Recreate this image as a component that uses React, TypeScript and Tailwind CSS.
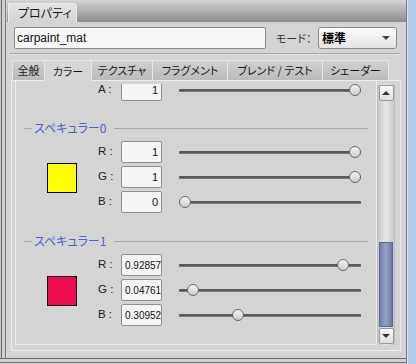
import React from "react";

type RowData = { label: string; value: string; v: number; left?: boolean };

const LATIN = "font-['Liberation_Sans','Noto_Sans_CJK_JP',sans-serif]";
const JP = "font-['Noto_Sans_CJK_JP','Liberation_Sans',sans-serif] [font-feature-settings:'palt']";

function Slider({ v }: { v: number }) {
  return (
    <div className="relative w-[182px] h-[22px] flex items-center">
      <div className="w-full h-[3px] rounded-[1px] bg-[#5a5a5a] border-b border-[#777777]" />
      <div
        className="absolute top-[5px] w-[12px] h-[12px] rounded-full border border-[#6a6a6a] bg-gradient-to-b from-[#f2f2f2] to-[#cdcdcd]"
        style={{ left: Math.round(v * 170) }}
      />
    </div>
  );
}

function Row({ r }: { r: RowData }) {
  return (
    <div className="flex items-center h-[22px]">
      <div className={`w-[23px] text-[11.5px] text-[#222] ${LATIN}`}>{r.label}</div>
      <div
        className={`w-[41px] h-[22px] border border-[#8e8e8e] rounded-[2px] bg-[#f5f5f5] overflow-hidden flex items-center whitespace-nowrap text-[#111] ${LATIN} ${
          r.left ? "justify-start pl-[3px] text-[10px]" : "justify-end pr-[3px] text-[11px]"
        }`}
      >
        {r.value}
      </div>
      <div className="ml-[17px]">
        <Slider v={r.v} />
      </div>
    </div>
  );
}

function Header({ title }: { title: string }) {
  return (
    <div className="flex items-center h-[16px]">
      <div className="ml-[8px] w-[8px] h-[1px] bg-[#a8a8a8]" />
      <div className={`ml-[2px] text-[12px] leading-[16px] text-[#4d62c6] ${JP}`}>{title}</div>
      <div className="ml-[8px] mr-[8px] flex-1 h-[1px] bg-[#a8a8a8]" />
    </div>
  );
}

function Section({ swatch, rows }: { swatch: string; rows: RowData[] }) {
  return (
    <div className="flex">
      <div className="w-[82px] flex items-center pt-[2px]">
        <div className={`ml-[31px] w-[30px] h-[30px] border border-black ${swatch}`} />
      </div>
      <div className="flex flex-col gap-[3px]">
        {rows.map((r) => (
          <Row key={r.label} r={r} />
        ))}
      </div>
    </div>
  );
}

const tabs: [string, string][] = [
  ["全般", "w-[33px]"],
  ["カラー", "w-[47px]"],
  ["テクスチャ", "w-[61px]"],
  ["フラグメント", "w-[75px]"],
  ["ブレンド / テスト", "w-[95px]"],
  ["シェーダー", "w-[66px]"],
];

export default function App() {
  return (
    <div className={`w-[416px] h-[364px] bg-[#d4d4d4] flex overflow-hidden ${JP}`}>
      <div className="w-[406px] h-full flex flex-col">
        <div className="h-[358px] flex">
          {/* left frame */}
          <div className="w-[7px] h-full flex">
            <div className="w-[1px] bg-[#c6c6c6]" />
            <div className="w-[1px] bg-[#6c6c6c]" />
            <div className="w-[3px] bg-[#d0d0d0]" />
            <div className="w-[1px] bg-[#7c7c7c]" />
            <div className="w-[1px] bg-[#d4d4d4]" />
          </div>
          {/* main */}
          <div className="flex-1 flex flex-col">
            {/* title bar */}
            <div className="h-[22px] bg-gradient-to-b from-[#d4d4d4] to-[#8c8c8c] flex items-end">
              <div className="ml-[1px] w-[69px] h-[19px] rounded-tr-[4px] border-t border-r border-l border-[#eaeaea] bg-gradient-to-b from-[#e2e2e2] to-[#d4d4d4] flex items-center pl-[9px] text-[12px] text-[#1a1a1a]">
                プロパティ
              </div>
            </div>
            {/* name + mode */}
            <div className="mt-[5px] pl-[7px] flex items-center h-[22px]">
              <div
                className={`w-[252px] h-[22px] border border-[#8a8a8a] rounded-[2px] bg-[#f7f7f7] flex items-center pl-[2px] text-[12px] text-[#111] ${LATIN}`}
              >
                carpaint_mat
              </div>
              <div className="ml-[10px] w-[36px] text-[11px] text-[#333]">モード：</div>
              <div className="ml-[6px] w-[79px] h-[22px] border border-[#8a8a8a] rounded-[3px] bg-gradient-to-b from-[#fcfcfc] to-[#e4e4e4] flex items-center justify-between pl-[3px] pr-[6px]">
                <span className="text-[12px] font-bold text-black">標準</span>
                <div className="w-0 h-0 border-x-[4px] border-x-transparent border-t-[4px] border-t-[#444]" />
              </div>
            </div>
            {/* separator */}
            <div className="mt-[4px] ml-[3px] w-[390px] h-[1px] bg-[#a6a6a6]" />
            <div className="ml-[3px] w-[390px] h-[1px] bg-[#e4e4e4]" />
            {/* tabs */}
            <div className="mt-[5px] ml-[5px] flex items-start h-[20px] relative z-10">
              {tabs.map(([t, w], i) => {
                const active = i === 1;
                return (
                  <div
                    key={t}
                    className={`${w} flex items-center justify-center border-t border-r border-[#e6e6e6] text-[11px] text-[#1a1a1a] whitespace-nowrap ${
                      i === 0 ? "border-l" : ""
                    } ${
                      active
                        ? "h-[21px] bg-[#d6d6d6]"
                        : "h-[20px] bg-gradient-to-b from-[#d0d0d0] to-[#bababa]"
                    }`}
                  >
                    {t}
                  </div>
                );
              })}
            </div>
            {/* tab panel */}
            <div className="ml-[4px] w-[390px] h-[271px] border border-[#ececec] flex pl-[3px]">
              <div className="w-[362px] h-[264px] border-l border-r border-b border-[#ececec] flex flex-col">
                <div className="mt-[3px] flex-1 overflow-hidden">
                  <div className="-mt-[5px] flex flex-col">
                    <div className="flex">
                      <div className="w-[82px]" />
                      <Row r={{ label: "A :", value: "1", v: 1 }} />
                    </div>
                    <div className="mt-[19px]">
                      <Header title="スペキュラー0" />
                    </div>
                    <div className="mt-[5px]">
                      <Section
                        swatch="bg-[#ffff00]"
                        rows={[
                          { label: "R :", value: "1", v: 1 },
                          { label: "G :", value: "1", v: 1 },
                          { label: "B :", value: "0", v: 0 },
                        ]}
                      />
                    </div>
                    <div className="mt-[20px]">
                      <Header title="スペキュラー1" />
                    </div>
                    <div className="mt-[5px]">
                      <Section
                        swatch="bg-[#ed0c4f]"
                        rows={[
                          { label: "R :", value: "0.92857", v: 0.928571, left: true },
                          { label: "G :", value: "0.04761", v: 0.047619, left: true },
                          { label: "B :", value: "0.30952", v: 0.309523, left: true },
                        ]}
                      />
                    </div>
                  </div>
                </div>
              </div>
              {/* scrollbar */}
              <div className="w-[18px] h-[261px] mt-[3px] flex flex-col items-center border-x border-[#bdbdbd] bg-gradient-to-r from-[#c8c8c8] via-[#e6e6e6] to-[#c8c8c8]">
                <div className="mt-[1px] w-[15px] h-[16px] border border-[#999999] rounded-[2px] bg-gradient-to-b from-[#fafafa] to-[#dedede] flex items-center justify-center">
                  <div className="w-0 h-0 border-x-[4px] border-x-transparent border-b-[4px] border-b-[#333]" />
                </div>
                <div className="flex-1" />
                <div className="w-[14px] h-[85px] border border-[#5a6892] bg-gradient-to-r from-[#7480ab] via-[#97a2c8] to-[#6c78a3]" />
                <div className="mt-[1px] mb-[1px] w-[15px] h-[16px] border border-[#999999] rounded-[2px] bg-gradient-to-b from-[#fafafa] to-[#dedede] flex items-center justify-center">
                  <div className="w-0 h-0 border-x-[4px] border-x-transparent border-t-[4px] border-t-[#333]" />
                </div>
              </div>
            </div>
          </div>
        </div>
        {/* bottom frame */}
        <div className="h-[1px] bg-[#6c6c6c]" />
        <div className="h-[3px] bg-[#d0d0d0]" />
        <div className="h-[1px] bg-[#6c6c6c]" />
        <div className="flex-1 bg-[#d4d4d4]" />
      </div>
      {/* right frame */}
      <div className="w-[10px] h-full flex">
        <div className="w-[1px] bg-[#7c7c7c]" />
        <div className="w-[1px] bg-[#d6e2f0]" />
        <div className="flex-1 bg-[#b5cdeb]" />
      </div>
    </div>
  );
}
